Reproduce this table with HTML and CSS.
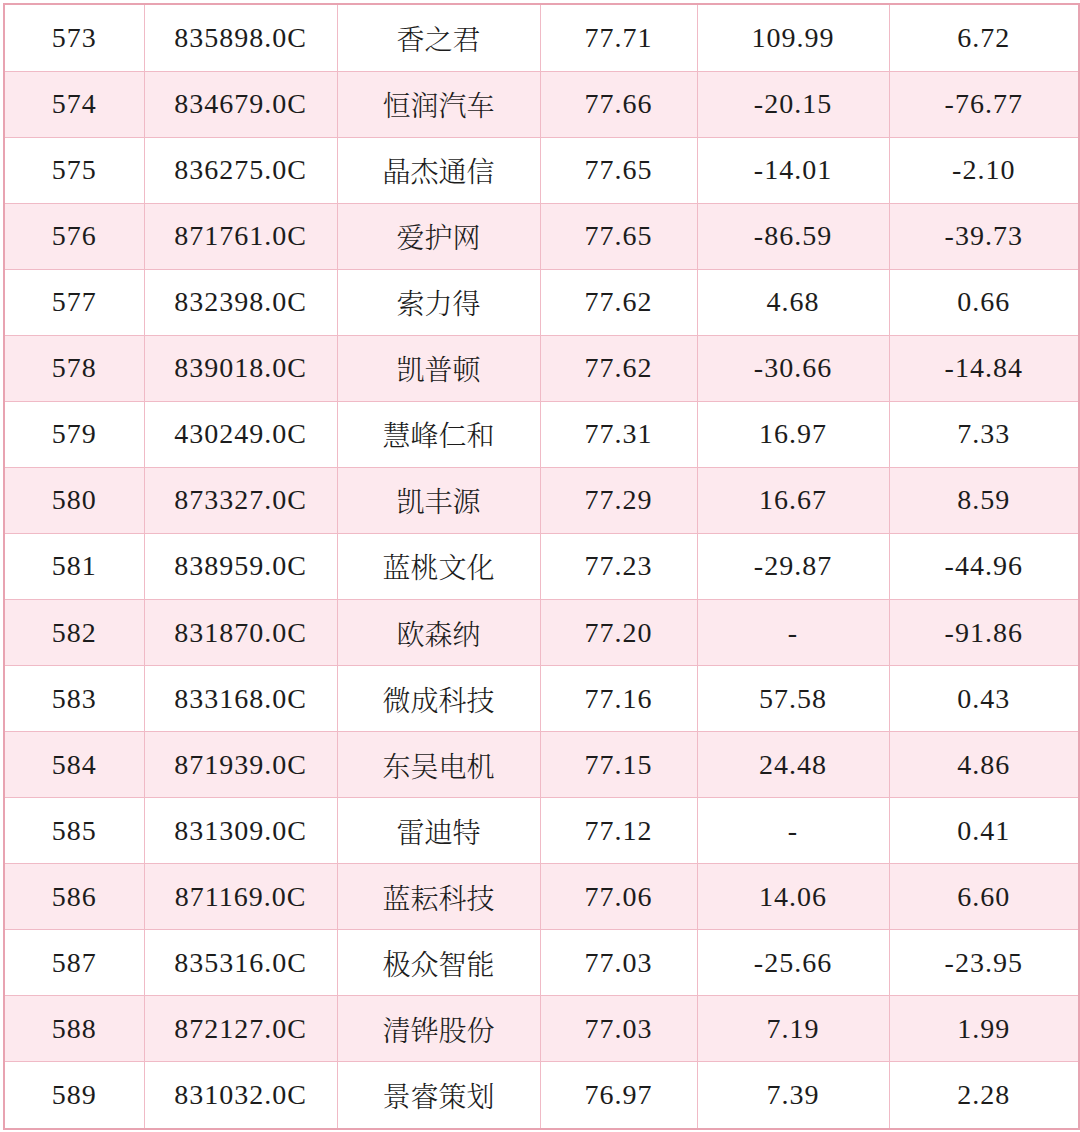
FILE: index.html
```html
<!DOCTYPE html>
<html lang="zh">
<head>
<meta charset="utf-8">
<link rel="stylesheet" href="styles.css">
</head>
<body>
<table class="grid">
<colgroup>
<col class="c1"><col class="c2"><col class="c3"><col class="c4"><col class="c5"><col class="c6">
</colgroup>
<tbody>
<tr><td>573</td><td>835898.0C</td><td class="zh">香之君</td><td>77.71</td><td>109.99</td><td>6.72</td></tr>
<tr class="alt"><td>574</td><td>834679.0C</td><td class="zh">恒润汽车</td><td>77.66</td><td>-20.15</td><td>-76.77</td></tr>
<tr><td>575</td><td>836275.0C</td><td class="zh">晶杰通信</td><td>77.65</td><td>-14.01</td><td>-2.10</td></tr>
<tr class="alt"><td>576</td><td>871761.0C</td><td class="zh">爱护网</td><td>77.65</td><td>-86.59</td><td>-39.73</td></tr>
<tr><td>577</td><td>832398.0C</td><td class="zh">索力得</td><td>77.62</td><td>4.68</td><td>0.66</td></tr>
<tr class="alt"><td>578</td><td>839018.0C</td><td class="zh">凯普顿</td><td>77.62</td><td>-30.66</td><td>-14.84</td></tr>
<tr><td>579</td><td>430249.0C</td><td class="zh">慧峰仁和</td><td>77.31</td><td>16.97</td><td>7.33</td></tr>
<tr class="alt"><td>580</td><td>873327.0C</td><td class="zh">凯丰源</td><td>77.29</td><td>16.67</td><td>8.59</td></tr>
<tr><td>581</td><td>838959.0C</td><td class="zh">蓝桃文化</td><td>77.23</td><td>-29.87</td><td>-44.96</td></tr>
<tr class="alt"><td>582</td><td>831870.0C</td><td class="zh">欧森纳</td><td>77.20</td><td>-</td><td>-91.86</td></tr>
<tr><td>583</td><td>833168.0C</td><td class="zh">微成科技</td><td>77.16</td><td>57.58</td><td>0.43</td></tr>
<tr class="alt"><td>584</td><td>871939.0C</td><td class="zh">东吴电机</td><td>77.15</td><td>24.48</td><td>4.86</td></tr>
<tr><td>585</td><td>831309.0C</td><td class="zh">雷迪特</td><td>77.12</td><td>-</td><td>0.41</td></tr>
<tr class="alt"><td>586</td><td>871169.0C</td><td class="zh">蓝耘科技</td><td>77.06</td><td>14.06</td><td>6.60</td></tr>
<tr><td>587</td><td>835316.0C</td><td class="zh">极众智能</td><td>77.03</td><td>-25.66</td><td>-23.95</td></tr>
<tr class="alt"><td>588</td><td>872127.0C</td><td class="zh">清铧股份</td><td>77.03</td><td>7.19</td><td>1.99</td></tr>
<tr><td>589</td><td>831032.0C</td><td class="zh">景睿策划</td><td>76.97</td><td>7.39</td><td>2.28</td></tr>
</tbody>
</table>
</body>
</html>
```
FILE: styles.css
```css
html, body {
  margin: 0;
  padding: 0;
  background: #ffffff;
}
body {
  padding: 3px 0 0 3px;
}
.grid {
  border-collapse: collapse;
  table-layout: fixed;
  width: 1075px;
  height: 1127px;
  border: 2px solid #e8a3b1;
  font-family: "Liberation Serif", "Noto Serif CJK SC", "Noto Sans CJK SC", serif;
  font-size: 28px;
  color: #1c1c1c;
}
.c1 { width: 140px; }
.c2 { width: 193px; }
.c3 { width: 203px; }
.c4 { width: 157px; }
.c5 { width: 192px; }
.c6 { width: 190px; }
.grid td {
  border: 1px solid #f0bac6;
  text-align: center;
  vertical-align: middle;
  padding: 0;
  line-height: 30px;
  letter-spacing: 1px;
  white-space: nowrap;
}
.grid tr.alt td {
  background: #fde9ee;
}
.grid td.zh {
  font-family: "Noto Serif CJK SC", "Noto Sans CJK SC", serif;
  font-weight: 300;
  letter-spacing: 0;
}
```
